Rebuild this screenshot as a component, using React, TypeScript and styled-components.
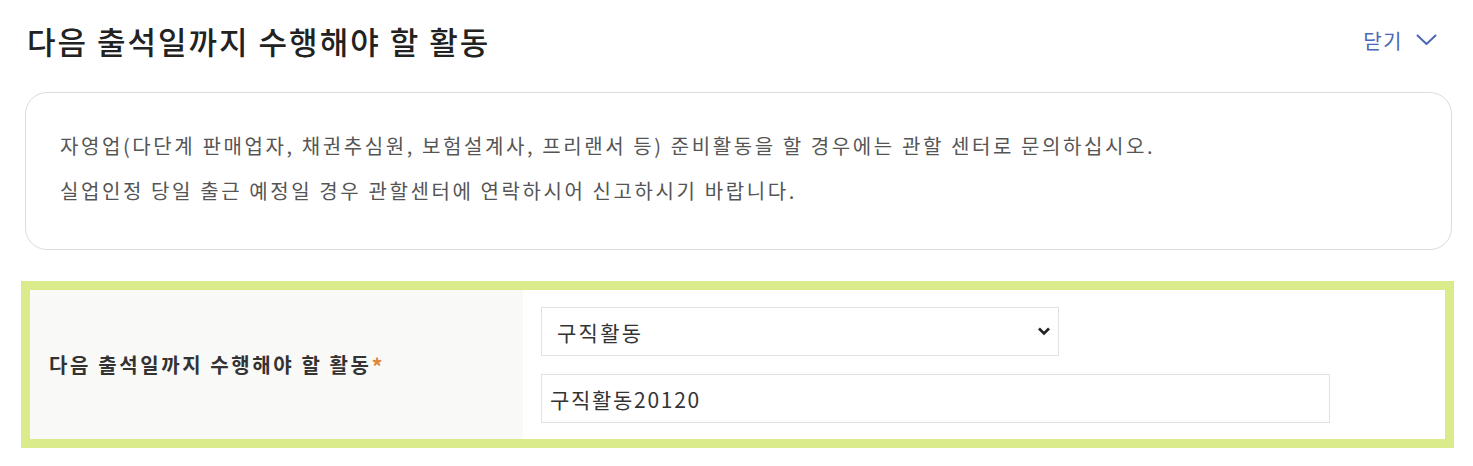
import { createGlobalStyle } from 'styled-components'
import styled from 'styled-components'

const GlobalStyle = createGlobalStyle`
  * { box-sizing: border-box; }
  body {
    margin: 0;
    background: #fff;
    font-family: "Noto Sans CJK KR", "Noto Sans", sans-serif;
    color: #333;
  }
`

const Page = styled.div`
  padding: 13px 19px 0 21px;
`

const Header = styled.div`
  display: flex;
  align-items: center;
  justify-content: space-between;
  height: 54px;
  padding: 0 17px 0 6px;
`

const Title = styled.h2`
  margin: 0;
  font-size: 31px;
  font-weight: 500;
  letter-spacing: 2px;
  color: #222;
`

const ToggleButton = styled.button`
  display: flex;
  align-items: center;
  gap: 13px;
  border: 0;
  background: none;
  padding: 0;
  font-family: inherit;
  font-size: 20px;
  letter-spacing: 1.5px;
  color: #4b68b8;
  cursor: pointer;
`

const Notice = styled.div`
  margin: 25px 2px 0 4px;
  padding: 30px 34px 36px;
  border: 1px solid #dcdcdc;
  border-radius: 22px;
`

const NoticeLine = styled.p`
  margin: 0;
  font-size: 20px;
  letter-spacing: 2.6px;
  line-height: 45px;
  color: #555;
`

const FormBox = styled.div`
  margin-top: 31px;
  display: grid;
  grid-template-columns: 493px 1fr;
  border: 9px solid #d9eb8a;
`

const LabelCell = styled.div`
  display: flex;
  align-items: center;
  padding: 0 19px;
  background: #f9f9f7;
  font-size: 20px;
  font-weight: 700;
  letter-spacing: 2.6px;
  color: #333;
`

const Required = styled.span`
  color: #e0873a;
  font-size: 22px;
  letter-spacing: 0;
`

const FieldCell = styled.div`
  display: flex;
  flex-direction: column;
  gap: 18px;
  padding: 17px 18px 16px;
`

const SelectWrap = styled.div`
  position: relative;
  width: 518px;
`

const Select = styled.select`
  appearance: none;
  width: 100%;
  height: 49px;
  padding: 0 40px 0 15px;
  border: 1px solid #e2e2e2;
  border-radius: 0;
  background: #fff;
  font-family: inherit;
  font-size: 21px;
  letter-spacing: 2.3px;
  color: #333;
  outline: none;
`

const SelectArrow = styled.svg`
  position: absolute;
  right: 8px;
  top: 19px;
  pointer-events: none;
`

const TextInput = styled.input`
  width: 789px;
  height: 49px;
  padding: 0 8px;
  border: 1px solid #e2e2e2;
  border-radius: 0;
  font-family: inherit;
  font-size: 21px;
  letter-spacing: 1.7px;
  color: #333;
  outline: none;
`

export default function App() {
  return (
    <Page>
      <GlobalStyle />
      <Header>
        <Title>다음 출석일까지 수행해야 할 활동</Title>
        <ToggleButton type="button">
          닫기
          <svg width="21" height="12" viewBox="0 0 21 12" fill="none">
            <path d="M1.5 1.5 L10.5 10 L19.5 1.5" stroke="#4b68b8" strokeWidth="2" strokeLinecap="round" strokeLinejoin="round" />
          </svg>
        </ToggleButton>
      </Header>
      <Notice>
        <NoticeLine>
          자영업(다단계 판매업자, 채권추심원, 보험설계사, 프리랜서 등) 준비활동을 할 경우에는 관할 센터로 문의하십시오.
        </NoticeLine>
        <NoticeLine>실업인정 당일 출근 예정일 경우 관할센터에 연락하시어 신고하시기 바랍니다.</NoticeLine>
      </Notice>
      <FormBox>
        <LabelCell>
          다음 출석일까지 수행해야 할 활동<Required>*</Required>
        </LabelCell>
        <FieldCell>
          <SelectWrap>
            <Select defaultValue="job">
              <option value="job">구직활동</option>
            </Select>
            <SelectArrow width="14" height="10" viewBox="0 0 14 10">
              <path d="M2 2.5 L7 7.5 L12 2.5" stroke="#222" strokeWidth="2.6" fill="none" />
            </SelectArrow>
          </SelectWrap>
          <TextInput defaultValue="구직활동20120" />
        </FieldCell>
      </FormBox>
    </Page>
  )
}
